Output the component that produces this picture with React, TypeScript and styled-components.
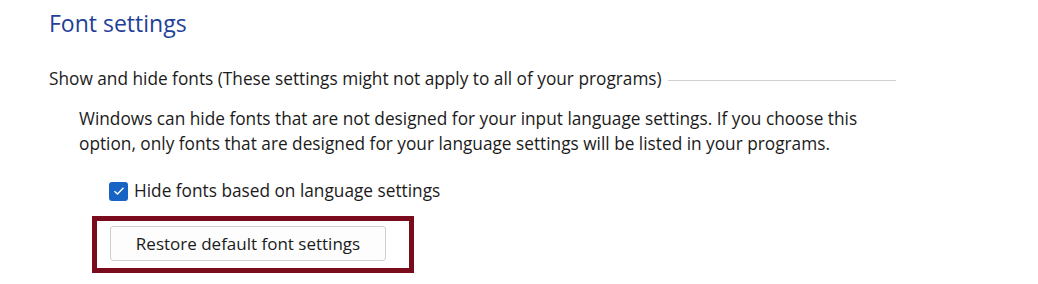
import styled, { createGlobalStyle } from "styled-components";

const GlobalStyle = createGlobalStyle`
    html, body {
        margin: 0;
        padding: 0;
        background: #ffffff;
    }

    body {
        font-family: "Open Sans", "Noto Sans", sans-serif;
        color: #1b1b1b;
    }
`

const Page = styled.div`
    width: 1038px;
    height: 284px;
    padding: 8px 0 0 49px;
    box-sizing: border-box;
    overflow: hidden;
`

const Title = styled.h2`
    margin: 0;
    font-weight: 400;
    font-size: 23px;
    line-height: 30px;
    color: #1f3f98;
`

const Group = styled.div`
    margin-top: 28px;
    width: 847px;
`

const GroupHeader = styled.div`
    display: flex;
    align-items: center;
    gap: 6px;
    font-size: 17.25px;
    line-height: 26px;
`

const Rule = styled.span`
    flex: 1;
    height: 1px;
    margin-top: 3px;
    background: #cfcfcf;
`

const Body = styled.div`
    padding: 14px 0 0 30px;
`

const Description = styled.p`
    margin: 0;
    font-size: 17.25px;
    line-height: 25px;
`

const CheckRow = styled.label`
    display: flex;
    align-items: center;
    gap: 6px;
    margin: 24px 0 0 60px;
    font-size: 17.25px;
    line-height: 22px;
`

const Box = styled.span`
    display: inline-flex;
    align-items: center;
    justify-content: center;
    width: 19px;
    height: 19px;
    border-radius: 3px;
    background: #1864c4;
`

const Highlight = styled.div`
    display: inline-flex;
    margin: 14px 0 0 43px;
    padding: 5px 23px 7px 13px;
    border: 5px solid #7a0b1c;
`

const Button = styled.button`
    width: 276px;
    height: 35px;
    padding: 0;
    border: 1px solid #d0d0d0;
    border-radius: 3px;
    background: #fdfdfd;
    font-family: inherit;
    font-size: 17px;
    color: #1b1b1b;
`

export default function App() {
    return (
        <>
            <GlobalStyle/>
            <Page>
                <Title>Font settings</Title>
                <Group>
                    <GroupHeader>
                        Show and hide fonts (These settings might not apply to all of your programs)
                        <Rule/>
                    </GroupHeader>
                    <Body>
                        <Description>
                            Windows can hide fonts that are not designed for your input language settings. If you choose this
                            <br/>
                            option, only fonts that are designed for your language settings will be listed in your programs.
                        </Description>
                    </Body>
                    <CheckRow>
                        <Box>
                            <svg width="12" height="10" viewBox="0 0 12 10">
                                <path d="M1.5 5.2 L4.5 8 L10.5 1.8" fill="none" stroke="#ffffff" strokeWidth="1.4"/>
                            </svg>
                        </Box>
                        Hide fonts based on language settings
                    </CheckRow>
                    <Highlight>
                        <Button>Restore default font settings</Button>
                    </Highlight>
                </Group>
            </Page>
        </>
    );
}
